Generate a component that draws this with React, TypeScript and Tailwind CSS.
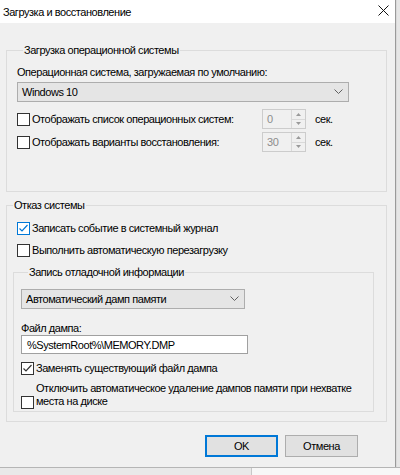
import type { ReactNode } from 'react'

const FONT = { fontFamily: '"Liberation Sans", Arial, sans-serif' }

function CheckBox({ checked = false, focus = false }: { checked?: boolean; focus?: boolean }) {
  const color = focus ? '#0078d7' : '#333333'
  return (
    <span
      className="flex h-[13px] w-[13px] shrink-0 items-center justify-center border bg-white"
      style={{ borderColor: color }}
    >
      {checked && (
        <svg width="11" height="11" viewBox="0 0 11 11">
          <path d="M1.5 5.5 L4 8 L9.5 2" fill="none" stroke={color} strokeWidth="1.2" />
        </svg>
      )}
    </span>
  )
}

function Check({ label, checked, focus, className = '' }: { label: ReactNode; checked?: boolean; focus?: boolean; className?: string }) {
  return (
    <label className={`flex h-[16px] items-center gap-[2px] whitespace-nowrap ${className}`}>
      <CheckBox checked={checked} focus={focus} />
      <span className="leading-[14px]">{label}</span>
    </label>
  )
}

function Chevron() {
  return (
    <svg width="9" height="6" viewBox="0 0 9 6">
      <path d="M0.5 0.5 L4.5 4.5 L8.5 0.5" fill="none" stroke="#606060" strokeWidth="1" />
    </svg>
  )
}

function Select({ value, className = '' }: { value: string; className?: string }) {
  return (
    <div className={`flex h-[20px] items-center justify-between border border-[#adadad] bg-[#e5e5e5] pl-[4px] pr-[5px] ${className}`}>
      <span className="leading-[14px]">{value}</span>
      <Chevron />
    </div>
  )
}

function Spinner({ value }: { value: string }) {
  return (
    <div className="flex h-[20px] w-[44px] border border-[#cccccc] bg-[#f0f0f0]">
      <span className="flex-1 pl-[4px] leading-[18px] text-[#8d8d8d]">{value}</span>
      <div className="flex w-[14px] flex-col border-l border-[#d9d9d9]">
        <div className="flex flex-1 items-center justify-center border-b border-[#d9d9d9]">
          <svg width="5" height="3" viewBox="0 0 5 3"><path d="M0 3 L2.5 0 L5 3 Z" fill="#9a9a9a" /></svg>
        </div>
        <div className="flex flex-1 items-center justify-center">
          <svg width="5" height="3" viewBox="0 0 5 3"><path d="M0 0 L2.5 3 L5 0 Z" fill="#9a9a9a" /></svg>
        </div>
      </div>
    </div>
  )
}

function Group({ title, className = '', legendClass = 'ml-[6px]', children }: { title: string; className?: string; legendClass?: string; children: ReactNode }) {
  return (
    <fieldset className={`border border-[#dcdcdc] ${className}`}>
      <legend className={`px-[1px] leading-[14px] ${legendClass}`}>{title}</legend>
      {children}
    </fieldset>
  )
}

export default function App() {
  return (
    <div
      className="flex h-[475px] w-[400px] flex-col overflow-hidden bg-[#f0f0f0] text-[11px] tracking-[-0.45px] text-black"
      style={FONT}
    >
      <div className="flex h-[467px]">
        <div className="flex w-[396px] flex-col border-r border-[#9a9a9a] bg-[#f0f0f0]">
          <div className="flex h-[23px] shrink-0 items-center justify-between bg-white pl-[3px] pr-[6px]">
            <span className="leading-[14px]">Загрузка и восстановление</span>
            <svg width="11" height="11" viewBox="0 0 11 11" className="mb-[2px]">
              <path d="M0.5 0.5 L10.5 10.5 M10.5 0.5 L0.5 10.5" stroke="#111" strokeWidth="1" />
            </svg>
          </div>

          <div className="flex flex-col pl-[6px] pr-[8px]">
            <Group title="Загрузка операционной системы" className="mt-[20px] pb-[39px] pl-[10px] pr-[37px]">
              <div className="mt-[8px] leading-[14px]">Операционная система, загружаемая по умолчанию:</div>
              <Select value="Windows 10" className="mt-[3px]" />
              <div className="mt-[7px] flex h-[20px] items-center">
                <Check label="Отображать список операционных систем:" className="w-[245px]" />
                <Spinner value="0" />
                <span className="ml-[9px] leading-[14px]">сек.</span>
              </div>
              <div className="mt-[3px] flex h-[20px] items-center">
                <Check label="Отображать варианты восстановления:" className="w-[245px]" />
                <Spinner value="30" />
                <span className="ml-[9px] leading-[14px]">сек.</span>
              </div>
            </Group>

            <Group title="Отказ системы" className="mt-[6px] pb-[9px]">
              <Check label="Записать событие в системный журнал" checked focus className="ml-[10px] mt-[8px]" />
              <Check label="Выполнить автоматическую перезагрузку" className="ml-[10px] mt-[6px]" />

              <Group
                title="Запись отладочной информации"
                className="ml-[6px] mt-[7px] w-[361px] pb-[3px] pl-[7px]"
                legendClass="ml-[7px]"
              >
                <Select value="Автоматический дамп памяти" className="mt-[10px] w-[224px]" />
                <div className="mt-[12px] leading-[14px]">Файл дампа:</div>
                <div className="flex h-[19px] w-[227px] items-center border border-[#a0a0a0] bg-white pl-[5px]">
                  <span className="leading-[14px]">%SystemRoot%\MEMORY.DMP</span>
                </div>
                <Check label="Заменять существующий файл дампа" checked className="mt-[6px]" />
                <label className="mt-[6px] flex items-end gap-[2px] whitespace-nowrap">
                  <span className="mb-[-1px]">
                    <CheckBox />
                  </span>
                  <span className="leading-[13px]">
                    Отключить автоматическое удаление дампов памяти при нехватке
                    <br />
                    места на диске
                  </span>
                </label>
              </Group>
            </Group>

            <div className="mt-[13px] flex justify-end gap-[7px] pr-[29px]">
              <button className="h-[22px] w-[73px] border-2 border-[#0078d7] bg-[#e1e1e1] leading-[14px]">OK</button>
              <button className="h-[22px] w-[73px] border border-[#adadad] bg-[#e1e1e1] leading-[14px]">Отмена</button>
            </div>
          </div>
        </div>
        <div className="flex-1 border-l border-[#dadada] bg-[#e6e6e6]" />
      </div>
      <div className="flex flex-1 border-t border-[#b5b5b5]">
        <div className="w-[252px] border-r border-[#c8c8c8] bg-[#e9e9e9]" />
        <div className="flex-1 bg-[#f7f7f7]" />
      </div>
    </div>
  )
}
